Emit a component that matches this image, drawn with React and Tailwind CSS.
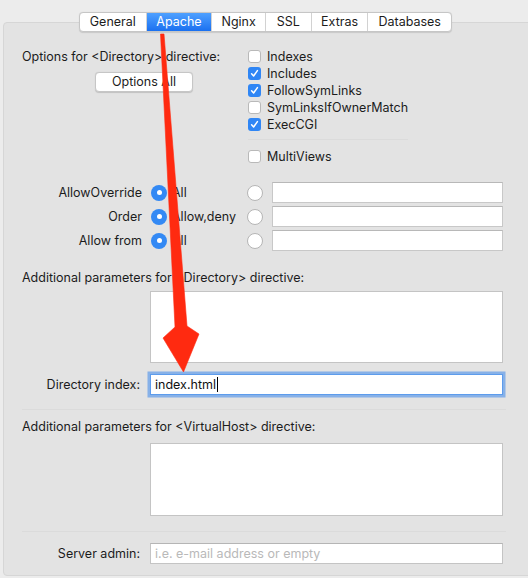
import React from "react";

const FONT = { fontFamily: "Inter, 'Liberation Sans', sans-serif" };

function Checkbox({ checked, label }) {
  return (
    <div className="flex h-[17px] items-center">
      {checked ? (
        <div className="flex h-[13px] w-[13px] items-center justify-center rounded-[3px] bg-[#2f86f5]">
          <svg width="9" height="9" viewBox="0 0 9 9">
            <polyline points="1.6,4.8 3.6,7 7.4,1.6" fill="none" stroke="white" strokeWidth="1.5" strokeLinecap="round" strokeLinejoin="round" />
          </svg>
        </div>
      ) : (
        <div className="h-[13px] w-[13px] rounded-[3px] border border-[#b9b9b9] bg-white" />
      )}
      <span className="ml-[6px] text-[12.5px] leading-[16px] text-[#1c1c1c]">{label}</span>
    </div>
  );
}

function RadioOn() {
  return (
    <div className="flex h-[16px] w-[16px] items-center justify-center rounded-full bg-[#3389f4]">
      <div className="h-[5px] w-[5px] rounded-full bg-white" />
    </div>
  );
}

function RadioOff() {
  return <div className="h-[16px] w-[16px] rounded-full border border-[#b5b5b5] bg-white" />;
}

function RadioRow({ label, value }) {
  return (
    <div className="flex h-[21px] items-center">
      <div className="w-[120px] text-right text-[12.5px] leading-[16px] text-[#1c1c1c]">{label}</div>
      <div className="ml-[9px]"><RadioOn /></div>
      <div className="ml-[5px] w-[75px] text-[12.5px] leading-[16px] text-[#1c1c1c]">{value}</div>
      <RadioOff />
      <div className="ml-[9px] h-[21px] w-[231px] border border-[#c8c8c8] border-t-[#b8b8b8] bg-white" />
    </div>
  );
}

const tabs = [
  { name: "General", w: "w-[66px]" },
  { name: "Apache", w: "w-[66px]", active: true },
  { name: "Nginx", w: "w-[54px]" },
  { name: "SSL", w: "w-[46px]" },
  { name: "Extras", w: "w-[57px]" },
  { name: "Databases", w: "w-[84px]" },
];

export default function App() {
  return (
    <div className="relative h-[578px] w-[528px] overflow-hidden bg-[#ececec]" style={FONT}>
      <div className="flex flex-col pt-[12px]">
        <div className="relative z-10 ml-[79px] flex h-[20px] w-[373px] overflow-hidden rounded-[4px] border border-[#c6c6c6] bg-white shadow-[0_0.5px_1px_rgba(0,0,0,0.12)]">
          {tabs.map((t, i) => (
            <div
              key={t.name}
              className={
                (t.active
                  ? "bg-gradient-to-b from-[#4ea0ff] to-[#1a70f0] text-white "
                  : "text-[#1c1c1c] ") +
                (i > 0 ? "border-l border-[#d2d2d2] " : "") +
                "flex h-full items-center justify-center text-[12.5px] leading-[16px] " +
                t.w
              }
            >
              {t.name}
            </div>
          ))}
        </div>

        <div className="-mt-[10px] ml-[3px] flex h-[554px] w-[540px] flex-col rounded-[4px] border border-[#d6d6d6] bg-[#e3e3e3] pl-[18px] pt-[25px]">
          {/* Options section */}
          <div className="flex">
            <div className="flex w-[226px] flex-col">
              <div className="mt-[1px] text-[12.5px] leading-[16px] text-[#1c1c1c]">
                Options for &lt;Directory&gt; directive:
              </div>
              <div className="ml-[73px] mt-[7px] flex h-[20px] w-[98px] items-center justify-center rounded-[4px] border border-[#c6c6c6] bg-white text-[12.5px] leading-[16px] text-[#1c1c1c] shadow-[0_0.5px_1px_rgba(0,0,0,0.15)]">
                Options All
              </div>
            </div>
            <div className="flex flex-col">
              <Checkbox label="Indexes" />
              <Checkbox label="Includes" checked />
              <Checkbox label="FollowSymLinks" checked />
              <Checkbox label="SymLinksIfOwnerMatch" />
              <Checkbox label="ExecCGI" checked />
              <div className="mt-[6px] h-px w-[160px] bg-[#dbdbdb]" />
              <div className="mt-[8px]">
                <Checkbox label="MultiViews" />
              </div>
            </div>
          </div>

          {/* Radio rows */}
          <div className="mt-[17px] flex flex-col gap-[3px]">
            <RadioRow label="AllowOverride" value="All" />
            <RadioRow label="Order" value="Allow,deny" />
            <RadioRow label="Allow from" value="All" />
          </div>

          <div className="mt-[19px] text-[12.5px] leading-[16px] text-[#1c1c1c]">
            Additional parameters for &lt;Directory&gt; directive:
          </div>
          <div className="ml-[128px] mt-[5px] h-[72px] w-[353px] border border-[#c4c4c4] bg-white" />

          <div className="mt-[11px] flex h-[21px] items-center">
            <div className="w-[118px] text-right text-[12.5px] leading-[16px] text-[#1c1c1c]">Directory index:</div>
            <div className="ml-[10px] flex h-[21px] w-[353px] items-center border border-[#5d9cec] bg-white pl-[4px] text-[12.5px] leading-[16px] text-[#111] shadow-[0_0_0_2.5px_rgba(104,160,234,0.75)]">
              index.html
              <span className="ml-[1px] inline-block h-[15px] w-px bg-black" />
            </div>
          </div>

          <div className="mt-[14px] h-px w-[484px] bg-[#dbdbdb]" />

          <div className="mt-[9px] text-[12.5px] leading-[16px] text-[#1c1c1c]">
            Additional parameters for &lt;VirtualHost&gt; directive:
          </div>
          <div className="ml-[128px] mt-[8px] h-[73px] w-[353px] border border-[#c4c4c4] bg-white" />

          <div className="mt-[15px] h-px w-[484px] bg-[#dbdbdb]" />

          <div className="mt-[11px] flex h-[21px] items-center">
            <div className="w-[118px] text-right text-[12.5px] leading-[16px] text-[#1c1c1c]">Server admin:</div>
            <div className="ml-[10px] flex h-[21px] w-[353px] items-center border border-[#c4c4c4] border-t-[#b5b5b5] bg-white pl-[4px] text-[12.5px] leading-[16px] text-[#b9b9b9]">
              i.e. e-mail address or empty
            </div>
          </div>
        </div>
      </div>

      {/* Red annotation arrow */}
      <svg className="pointer-events-none absolute left-0 top-0" width="528" height="578" viewBox="0 0 528 578">
        <polygon
          points="160.5,34 164,34 187,326 199,334 183.5,372 163,338 175,327"
          fill="#ff2a10"
          stroke="#ff2a10"
          strokeWidth="0.6"
          strokeLinejoin="round"
        />
      </svg>
    </div>
  );
}
